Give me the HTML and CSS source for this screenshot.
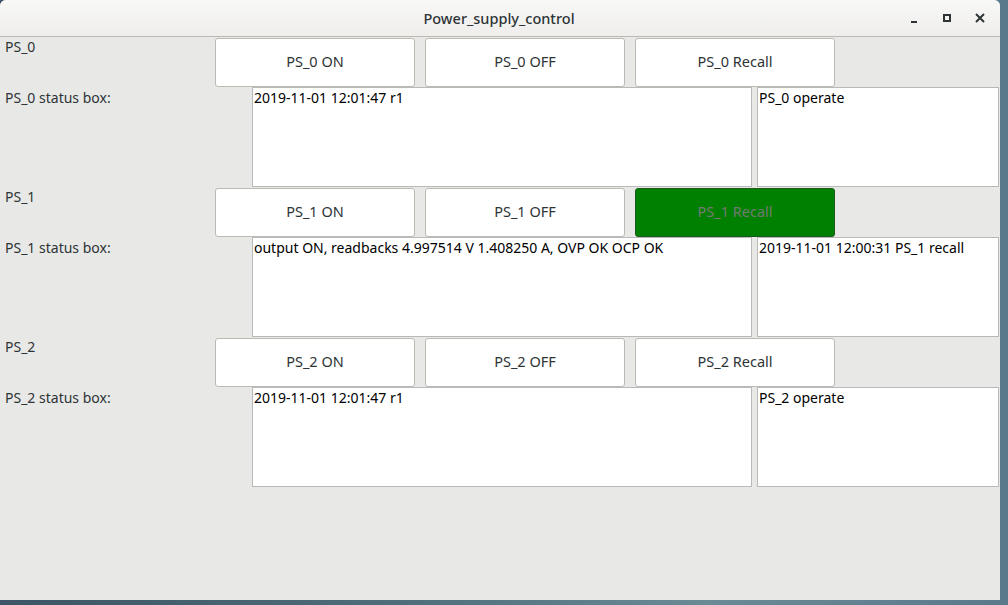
FILE: index.html
```html
<!DOCTYPE html>
<html>
<head>
<meta charset="utf-8">
<link rel="stylesheet" href="styles.css">
</head>
<body>
<div class="window">
  <div class="titlebar">
    <div class="title">Power_supply_control</div>
    <div class="controls">
      <span class="ctl min"></span>
      <span class="ctl max"></span>
      <span class="ctl close">
        <svg width="10" height="10" viewBox="0 0 10 10"><path d="M1 1L9 9M9 1L1 9" stroke="#2e3436" stroke-width="2"/></svg>
      </span>
    </div>
  </div>
  <div class="content">
    <div class="group">
      <div class="btnrow">
        <div class="label">PS_0</div>
        <button class="btn">PS_0 ON</button>
        <button class="btn">PS_0 OFF</button>
        <button class="btn">PS_0 Recall</button>
      </div>
      <div class="statusrow">
        <div class="label">PS_0 status box:</div>
        <div class="box wide">2019-11-01 12:01:47 r1</div>
        <div class="box narrow">PS_0 operate</div>
      </div>
    </div>
    <div class="group">
      <div class="btnrow">
        <div class="label">PS_1</div>
        <button class="btn">PS_1 ON</button>
        <button class="btn">PS_1 OFF</button>
        <button class="btn active">PS_1 Recall</button>
      </div>
      <div class="statusrow">
        <div class="label">PS_1 status box:</div>
        <div class="box wide">output ON, readbacks 4.997514 V 1.408250 A, OVP OK OCP OK</div>
        <div class="box narrow">2019-11-01 12:00:31 PS_1 recall</div>
      </div>
    </div>
    <div class="group">
      <div class="btnrow">
        <div class="label">PS_2</div>
        <button class="btn">PS_2 ON</button>
        <button class="btn">PS_2 OFF</button>
        <button class="btn">PS_2 Recall</button>
      </div>
      <div class="statusrow">
        <div class="label">PS_2 status box:</div>
        <div class="box wide">2019-11-01 12:01:47 r1</div>
        <div class="box narrow">PS_2 operate</div>
      </div>
    </div>
  </div>
</div>
</body>
</html>
```
FILE: styles.css
```css
html, body {
  margin: 0;
  padding: 0;
}
body {
  width: 1008px;
  height: 605px;
  overflow: hidden;
  background: linear-gradient(90deg, #3d5566 0%, #4f6d7a 40%, #6a8a96 70%, #5a7a8c 100%);
  font-family: "Noto Sans", "DejaVu Sans", sans-serif;
}
.window {
  width: 1000px;
  height: 600px;
  background: #e8e8e7;
  border-radius: 6px 6px 0 0;
  overflow: hidden;
  display: flex;
  flex-direction: column;
}
.titlebar {
  height: 36px;
  flex: none;
  background: linear-gradient(#f8f8f7, #efeeed);
  border-bottom: 1px solid #bfb8b1;
  position: relative;
  display: flex;
  align-items: center;
  justify-content: center;
}
.title {
  font-size: 14.5px;
  font-weight: 500;
  color: #2e3436;
  margin-left: -2px;
}
.controls {
  position: absolute;
  right: 4px;
  top: 0;
  height: 36px;
  display: flex;
  align-items: center;
}
.ctl {
  width: 33px;
  height: 20px;
  display: flex;
  align-items: center;
  justify-content: center;
}
.ctl.min::before {
  content: "";
  width: 6px;
  height: 2px;
  background: #2e3436;
  margin-top: 7px;
}
.ctl.max::before {
  content: "";
  width: 4px;
  height: 4px;
  border: 2px solid #2e3436;
}
.content {
  display: flex;
  flex-direction: column;
}
.group {
  display: flex;
  flex-direction: column;
  height: 150px;
}
.btnrow {
  display: flex;
  height: 50px;
  align-items: flex-start;
  gap: 10px;
}
.btnrow .label {
  width: 200px;
  padding-left: 5px;
  padding-top: 1px;
}
.label {
  font-size: 14px;
  color: #2e3436;
  line-height: 18px;
  flex: none;
}
.btn {
  width: 200px;
  height: 49px;
  margin-top: 1px;
  flex: none;
  background: #ffffff;
  border: 1px solid #bdb9b3;
  border-radius: 3px;
  font-family: "Noto Sans", "DejaVu Sans", sans-serif;
  font-size: 14.5px;
  color: #2e3436;
  padding: 0 0 4px 0;
}
.btn.active {
  background: #008000;
  border-color: #1c5a1c;
  color: #727a72;
}
.statusrow {
  display: flex;
  height: 100px;
  gap: 5px;
}
.statusrow .label {
  width: 242px;
  padding-left: 5px;
  padding-top: 2px;
}
.box {
  height: 98px;
  background: #ffffff;
  border: 1px solid #b9b9b9;
  font-size: 14px;
  color: #000000;
  line-height: 20px;
  padding-left: 1px;
  box-sizing: content-box;
}
.box.wide {
  width: 497px;
}
.box.narrow {
  width: 239px;
}
```
